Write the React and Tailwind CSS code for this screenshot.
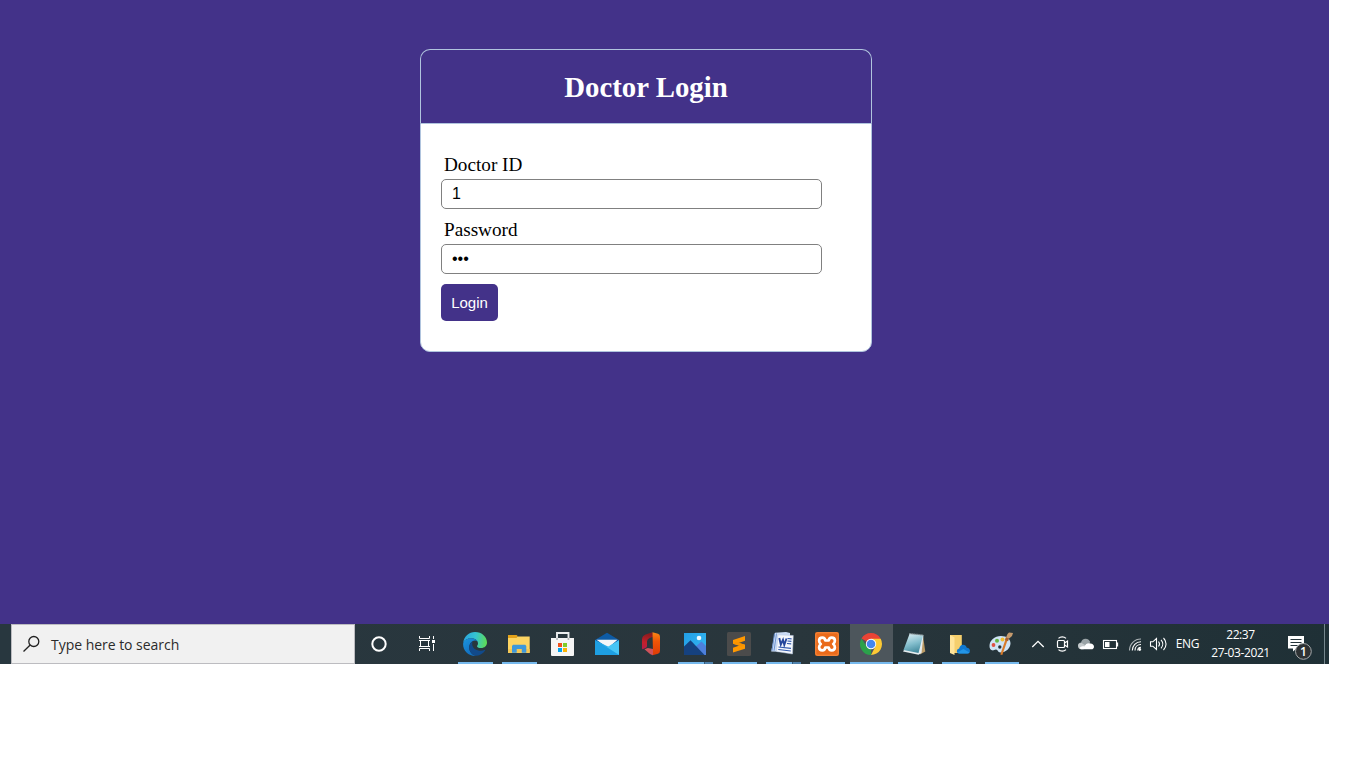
import React from "react";

const Icon = ({ children, className = "" }) => (
  <svg width="24" height="24" viewBox="0 0 24 24" fill="none" className={`shrink-0 ${className}`}>
    {children}
  </svg>
);

const Edge = () => (
  <Icon>
    <defs>
      <linearGradient id="edgeTop" x1="0" y1="6" x2="24" y2="10" gradientUnits="userSpaceOnUse">
        <stop offset="0" stopColor="#2aa5e0" />
        <stop offset=".5" stopColor="#35c3d2" />
        <stop offset="1" stopColor="#5fdc50" />
      </linearGradient>
      <linearGradient id="edgeLow" x1="0" y1="8" x2="12" y2="24" gradientUnits="userSpaceOnUse">
        <stop offset="0" stopColor="#1b92dc" />
        <stop offset="1" stopColor="#0f66b8" />
      </linearGradient>
    </defs>
    <path d="M.3 10.5C1 4.400 6 0 12 0c7 0 12 5 12 10.500 0 3.300-2.600 5.500-5.800 5.500-3 0-4.200-1-4.200-1.800 0-.7 1-1 1-2.700C15 8.500 12 6.300 8.500 6.300 4.500 6.300 1.500 8 .3 10.500z" fill="url(#edgeTop)" />
    <path d="M.1 12C.3 8.500 4 6.300 8.300 6.300c3.900 0 6.700 2.400 6.700 5 0-1.500-1.200-2.800-3-2.800-3 0-5.800 3-5.800 7 0 4.500 3.500 8 7 8.400-.4 0-.8.1-1.200.1C5.400 24 0 18.700.1 12z" fill="url(#edgeLow)" />
    <path d="M9.500 9.300C7.500 10.600 6.200 13 6.200 15.500c0 4.500 3.500 8 7.500 8.300 3.500-.3 6.500-2.300 8.400-5.200.3-.5-.1-.9-.6-.6-1 .5-2.300.8-3.500.8-4.800 0-8.800-3-8.800-6.600 0-1.100.1-2 .3-2.900z" fill="#114a8b" />
  </Icon>
);

const Explorer = () => (
  <Icon>
    <path d="M1 4.500h21.700V21H1z" fill="#fcd462" />
    <path d="M1 3h8.600l1 1-1 2H1z" fill="#e3a21a" />
    <path d="M1 17h21.700v3.700H1z" fill="#f5c755" />
    <path d="M5 20.800V14l1-1.300h12.300l1 1.300v6.800h-4.500V17H9.700v3.800z" fill="#3d98db" />
  </Icon>
);

const Store = () => (
  <Icon>
    <path d="M6 8V1h11.500V8" stroke="#eceeef" strokeWidth="1.900" />
    <path d="M0 6h23v17.300l-.7.7H.7L0 23.300z" fill="#f5f5f5" />
    <path d="M5.200 6h1.700v2H5.200zM16.600 6h1.700v2h-1.700z" fill="#b3b7b8" />
    <path d="M7 11h4v4H7z" fill="#f1511b" />
    <path d="M12 11h4v4h-4z" fill="#80cc28" />
    <path d="M7 16h4v4H7z" fill="#00a4ef" />
    <path d="M12 16h4v4h-4z" fill="#fbb505" />
  </Icon>
);

const Mail = () => (
  <Icon>
    <path d="M0 8 12 .7 24 8v8H0z" fill="#0d5ba6" />
    <path d="M1.500 7.800h21L13 16z" fill="#f4f6f8" />
    <path d="M0 8.300 14 15 24 8.300V23H0z" fill="#2aaeea" />
    <path d="M24 8.300 12 15.300 24 23z" fill="#47c5f5" />
    <path d="M0 23 0 8.300 24 23z" fill="#1e9fe2" />
  </Icon>
);

const Office = () => (
  <Icon>
    <defs>
      <linearGradient id="officeLeft" x1="8" y1="2" x2="5" y2="19" gradientUnits="userSpaceOnUse">
        <stop offset="0" stopColor="#8e1b1f" />
        <stop offset=".5" stopColor="#c3202b" />
        <stop offset="1" stopColor="#b01c50" />
      </linearGradient>
      <linearGradient id="officeRight" x1="17" y1="0" x2="17" y2="23" gradientUnits="userSpaceOnUse">
        <stop offset="0" stopColor="#fb8a16" />
        <stop offset=".4" stopColor="#ef5507" />
        <stop offset="1" stopColor="#dd3b06" />
      </linearGradient>
    </defs>
    <path d="M13.500.3 6.500 2.500Q3 4 3 7.500v8.700q0 1.300 1.200.8L7 15.800q1-.5 1-1.800V9.500q0-2.500 2.500-3.500l3.500-1.200z" fill="url(#officeLeft)" />
    <path d="m5.500 17.300 3.300-1.200 5.200.8v6.400q-1.500-.1-3-1.200z" fill="#cf525b" />
    <path d="m13.500.3 5.500 1.500q2 .6 2 3v14q0 2.400-2 3l-5.500 1.500q.5-.6.500-2z" fill="url(#officeRight)" />
  </Icon>
);

const Photos = () => (
  <Icon>
    <defs>
      <linearGradient id="photoSky" x1="0" y1="0" x2="24" y2="14" gradientUnits="userSpaceOnUse">
        <stop offset="0" stopColor="#219de5" />
        <stop offset="1" stopColor="#33b5f1" />
      </linearGradient>
    </defs>
    <path d="M1 1h22v22H1z" fill="url(#photoSky)" />
    <path d="m12 15 6.500-5.500L23 14v9h-8z" fill="#4d80dc" />
    <path d="m1 14.500 6.500-6.300L21.500 23H1z" fill="#15417f" />
    <circle cx="16" cy="6" r="2.300" fill="#eefaff" />
  </Icon>
);

const Sublime = () => (
  <Icon>
    <rect width="24" height="24" rx="1.500" fill="#4b4b4b" />
    <path d="M18 4v4.700L11.500 11l6.500 1.800v3.900L6 20.500v-4.700l6.500-2.200L6 11.800V7.900z" fill="#ff9800" />
    <path d="m9 9.700 9 3.100-3 2L6 11.800z" fill="#f99300" />
  </Icon>
);

const Word = () => (
  <Icon>
    <path d="M4 .8 15 0l4 1v19L.2 19.500z" fill="#cbdcf5" />
    <path d="M3.500 1.500 1 18.800M5.500 1.500 3 18.800" stroke="#6d93cf" strokeWidth="1" />
    <path d="m7 2.800 15.300.7L21.500 22 5.500 19.500z" fill="#f5f8fd" stroke="#b4c5df" strokeWidth=".5" />
    <path d="m8.300 6 1.500 6.500L12 7.800l1.300 5.200L15.500 6.500" stroke="#25479c" strokeWidth="1.900" />
    <path d="m16.500 6.500 4.100.3M16.500 9l3.900.3M16 11.500l4.200.3M7.500 15l12.500 1.300M7.300 17.500l12.500 1.500" stroke="#3159ad" strokeWidth="1.200" />
  </Icon>
);

const Xampp = () => (
  <Icon>
    <rect width="24" height="24" rx="2" fill="#ea6a1a" />
    <rect x=".8" y=".8" width="22.400" height="22.400" rx="1.800" stroke="#f38b43" />
    <path d="M10.300 8.500h3.400C14 6.500 15 5.700 16.600 5.700c2 0 3.300 1.300 3.300 3.100 0 1.500-.6 2.400-1.700 3.200 1.100.8 1.700 1.700 1.700 3.200 0 1.800-1.300 3.100-3.300 3.100-1.600 0-2.600-.8-2.900-2.800h-3.400c-.3 2-1.300 2.800-2.900 2.800-2 0-3.300-1.300-3.300-3.100 0-1.500.6-2.400 1.700-3.200-1.100-.8-1.700-1.700-1.700-3.200 0-1.800 1.300-3.100 3.300-3.100 1.600 0 2.600.8 2.900 2.800z" stroke="#fff" strokeWidth="2.700" strokeLinejoin="round" />
  </Icon>
);

const Chrome = () => (
  <Icon className="-ml-[2px]">
    <path d="M12 12 2.470 6.500A11 11 0 0 1 21.530 6.500z" fill="#e94335" />
    <path d="m7.670 14.500 4.330 2.500L12 23A11 11 0 0 1 2.470 6.500z" fill="#2ba14b" />
    <path d="M12 6.800h9.700A11 11 0 0 1 12 23l4.330-8.500z" fill="#fcc934" />
    <circle cx="12" cy="12" r="5.200" fill="#fff" />
    <circle cx="12" cy="12" r="4.300" fill="#4486f0" />
  </Icon>
);

const Notepad = () => (
  <Icon>
    <defs>
      <linearGradient id="noteGlass" x1="6" y1="2" x2="12" y2="22" gradientUnits="userSpaceOnUse">
        <stop offset="0" stopColor="#d4eaf0" />
        <stop offset=".5" stopColor="#82bdcc" />
        <stop offset="1" stopColor="#3a8296" />
      </linearGradient>
    </defs>
    <path d="m20 4 2.300 15.500-5.300 3z" fill="#bb9b65" />
    <path d="M20.500 3 18.500 21l-3 1.700L0 19.500l1-1.500z" fill="#e6edf0" />
    <path d="M6.500 2 20 3.500 15.500 21 .5 18z" fill="url(#noteGlass)" />
    <path d="M6.500 1.800 20.500 3.300" stroke="#c6d4d7" strokeWidth="1.600" strokeDasharray="1 1" />
  </Icon>
);

const CloudFolder = () => (
  <Icon>
    <path d="M3 3h11.800v18L3 21z" fill="#f5cf6d" />
    <path d="m3 3 4.500 2.500V23L3 21z" fill="#ffe49a" />
    <path d="M10.200 20.500c-1-2 .5-3.800 2-4 .3-2.500 2-3.800 3.800-3.800 2 0 3.200 1.300 3.800 3 2 0 3.200 1.500 3.200 3s-1 2.800-2.500 2.800h-8.700z" fill="#0f78d0" />
    <path d="m10.300 20.500 6-3.500 6.300 3.600c-.4.6-1.200.9-2.100.9h-8.700z" fill="#2395e6" />
  </Icon>
);

const Paint = () => (
  <Icon className="-ml-[2px]">
    <path d="M.5 14C.5 8.500 5.500 4 12 4c5.500 0 9.500 2.800 9.500 7.200 0 4.800-4.500 9.300-10 9.300-3 0-2.300-3-4.500-3-1.800 0-2.300 1.300-4 .8C1.300 17.800.5 16 .5 14z" fill="#cfe4f4" />
    <circle cx="4.500" cy="13" r="1.900" fill="#df5144" />
    <circle cx="8" cy="8.800" r="2" fill="#64b543" />
    <circle cx="13.500" cy="7.500" r="2" fill="#f0bd32" />
    <circle cx="10.800" cy="15" r="1.700" fill="#263238" />
    <path d="m19.500 5.500-6.200 17.500-2-.5 6-17.500z" fill="#d87b2a" />
    <path d="m17 5.500 1.500-3.500L20 .5 24 1l-1 3-2.800 2.500z" fill="#c49a6d" />
    <path d="m16.800 5.200 3.200 1.500-1 2.500-3-1.200z" fill="#a8602f" />
  </Icon>
);

const full = "w-[35px]";
const apps = [
  { name: "edge", icon: Edge, bar: full },
  { name: "explorer", icon: Explorer, bar: full },
  { name: "store", icon: Store },
  { name: "mail", icon: Mail },
  { name: "office", icon: Office },
  { name: "photos", icon: Photos, bar: full, stacked: true },
  { name: "sublime", icon: Sublime, bar: full },
  { name: "word", icon: Word, bar: full, stacked: true },
  { name: "xampp", icon: Xampp, bar: full },
  { name: "chrome", icon: Chrome, bar: "w-[43px]", active: true },
  { name: "notepad", icon: Notepad, bar: full },
  { name: "cloud", icon: CloudFolder, bar: "w-[34px]" },
  { name: "paint", icon: Paint, bar: "w-[34px]", shift: true },
];

function TaskApp({ icon: Glyph, bar, stacked, active, shift }) {
  return (
    <div className={`flex h-10 w-11 shrink-0 ${shift ? "-ml-px" : ""}`}>
      <div className={`flex h-10 flex-col items-center ${active ? "ml-px w-[43px] bg-[#4d565c]" : "w-11"}`}>
        <div className="flex h-[38px] items-center pt-[2px]">
          <Glyph />
        </div>
        {bar && (
          <div className={`flex h-[2px] bg-[#76b9ed] ${bar}`}>
            {stacked && <div className="ml-auto h-[2px] w-[9px] border-l border-[#34597a] bg-[#5083ae]" />}
          </div>
        )}
      </div>
    </div>
  );
}

function Tray() {
  return (
    <svg width="144" height="40" viewBox="1025 624 144 40" fill="none" stroke="#fff" className="shrink-0">
      <path d="m1032.300 647 5.700-5.700 5.700 5.700" strokeWidth="1.300" />
      <path d="M1058.500 638.300c2-2 5.500-2 7.500 0M1058.500 649.700c2 2 5.500 2 7.500 0" strokeWidth="1.200" />
      <rect x="1057.500" y="640.500" width="7" height="7" rx="1" strokeWidth="1.200" />
      <path d="m1064.500 643 3-2v6l-3-2" strokeWidth="1.200" />
      <g stroke="none">
        <path d="M1078 645.500c0-2 1.500-3 3-3 .5-2.300 2.300-3.800 4.500-3.800 2.500 0 4.200 1.600 4.800 3.500l-3.300 3-5 3z" fill="#9aa3a6" />
        <path d="M1078 646c0-2 2-3.200 4-2.800l5 3-3.500 3h-2.500c-1.800 0-3-1.500-3-3.200z" fill="#c5cacc" />
        <path d="M1079.500 648c2-1.800 4-1.800 5-1.500 1-2.800 3.500-4 6-3 2 0 3.500 1.400 3.500 3.200 0 1.500-1 2.600-2.700 2.600H1081z" fill="#fff" />
      </g>
      <rect x="1103.500" y="640.500" width="13" height="8" strokeWidth="1.100" />
      <path d="M1117.500 642.500v4" strokeWidth="1.300" />
      <path d="M1105 642h4.500v5h-4.500z" fill="#fff" stroke="none" />
      <g strokeWidth="1.100">
        <path d="M1129.500 650.500c0-6.500 5-11.500 11.500-11.500" stroke="#aeb5b8" />
        <path d="M1132.300 650.500c0-5 3.700-8.700 8.700-8.700M1135 650.500c0-3.500 2.500-6 6-6M1137.700 650.500c0-2 1.300-3.300 3.300-3.300" />
        <circle cx="1139.700" cy="649.500" r="1.400" fill="#fff" stroke="none" />
      </g>
      <path d="M1150.500 641.800h2.300l3.700-3.300v11l-3.700-3.300h-2.300z" strokeWidth="1.100" />
      <path d="M1158.500 641.500c1.300 1.600 1.300 3.400 0 5M1161 639.800c2.300 2.500 2.300 6 0 8.500M1163.500 638c3.400 3.500 3.400 8.500 0 12" strokeWidth="1.100" />
    </svg>
  );
}

function Taskbar() {
  return (
    <div className="flex h-10 w-[1329px] bg-linear-to-r from-[#28373f] via-[#29363c] via-60% to-[#1f3036] pl-[11px] font-['Open_Sans','Noto_Sans',sans-serif] text-white">
      <div className="flex h-10 w-[344px] shrink-0 items-center border border-[#bcbcc0] bg-[#f1f1f1] pl-[11px] text-[#2b2b2b]">
        <svg width="18" height="18" viewBox="0 0 18 18" fill="none" stroke="#222" strokeWidth="1.300" className="shrink-0">
          <circle cx="10.800" cy="6.500" r="5" />
          <path d="m7.200 10-6.700 6.500" />
        </svg>
        <span className="ml-[10px] pt-[2px] text-[14px] leading-5 whitespace-nowrap tracking-[-0.03px]">Type here to search</span>
      </div>
      <div className="flex w-12 shrink-0 items-center justify-center">
        <svg width="18" height="18" viewBox="0 0 18 18" fill="none" stroke="#fff" strokeWidth="2">
          <circle cx="9" cy="9" r="6.700" />
        </svg>
      </div>
      <div className="flex w-[50px] shrink-0 items-center pl-4">
        <svg width="17" height="16" viewBox="0 0 17 16" fill="none" stroke="#fff" className="shrink-0">
          <path d="M.5 0v2.500h10V0M.5 15v-2.500h10V15M1.500 4.500h8v6h-8zM0 4.500h11M0 10.500h11M14.500 0v3M14.500 8v7" />
          <path d="M13 4h3v3h-3z" fill="#fff" stroke="none" />
        </svg>
      </div>
      <div className="flex w-[572px] shrink-0">
        {apps.map(({ name, ...app }) => (
          <TaskApp key={name} {...app} />
        ))}
      </div>
      <Tray />
      <div className="flex w-[37px] shrink-0 items-center justify-center text-[12px] tracking-[-0.3px]">ENG</div>
      <div className="flex w-[69px] shrink-0 flex-col items-center pt-[2px] text-[12px] leading-[18px] tracking-[-0.4px]">
        <span>22:37</span>
        <span>27-03-2021</span>
      </div>
      <div className="flex w-[49px] shrink-0 items-center pl-3">
        <svg width="28" height="40" viewBox="0 0 28 40" className="shrink-0">
          <path d="M1 12h16v12.500H9.500L6 27.500v-3H1z" fill="#fff" />
          <path d="M3.500 15.500h11M3.500 18.500h11M3.500 21.500h7" stroke="#25343a" />
          <circle cx="16.400" cy="27.400" r="7.900" fill="#2e3234" stroke="#a5a9ab" />
          <text x="16.400" y="31.500" textAnchor="middle" fontSize="12" fontWeight="600" fill="#fff">1</text>
        </svg>
      </div>
      <div className="h-10 w-px shrink-0 bg-[#75868c]" />
    </div>
  );
}

export default function App() {
  return (
    <div className="h-[768px] w-[1366px] overflow-hidden bg-white">
      <div className="h-[624px] w-[1329px] bg-[#433289] pt-[49px] pl-[420px] font-['Liberation_Serif',serif] text-[19.2px] text-black">
        <div className="flex h-[74px] w-[452px] items-center justify-center rounded-t-[10px] border border-b-0 border-[#b0c4de] pt-[2px] text-[28.8px] font-bold text-white">
          Doctor Login
        </div>
        <form className="h-[229px] w-[452px] rounded-b-[10px] border border-[#b0c4de] bg-white px-5 pt-[30px]" onSubmit={(e) => e.preventDefault()}>
          <label className="block h-[25px] pl-[3px] leading-[22px]">Doctor ID</label>
          <input
            className="block h-[30px] w-[381px] rounded-[5px] border border-[#808080] px-[10px] font-['Liberation_Sans',sans-serif] text-[16px]"
            defaultValue="1"
          />
          <label className="mt-[10px] block h-[25px] pl-[3px] leading-[22px]">Password</label>
          <input
            type="password"
            className="block h-[30px] w-[381px] rounded-[5px] border border-[#808080] px-[10px] font-['Liberation_Sans',sans-serif] text-[16px]"
            defaultValue="123"
          />
          <button className="mt-[10px] block h-[37px] w-[57px] rounded-[5px] bg-[#433289] pt-[2px] font-['Liberation_Sans',sans-serif] text-[15px] text-white">
            Login
          </button>
        </form>
      </div>
      <Taskbar />
    </div>
  );
}
